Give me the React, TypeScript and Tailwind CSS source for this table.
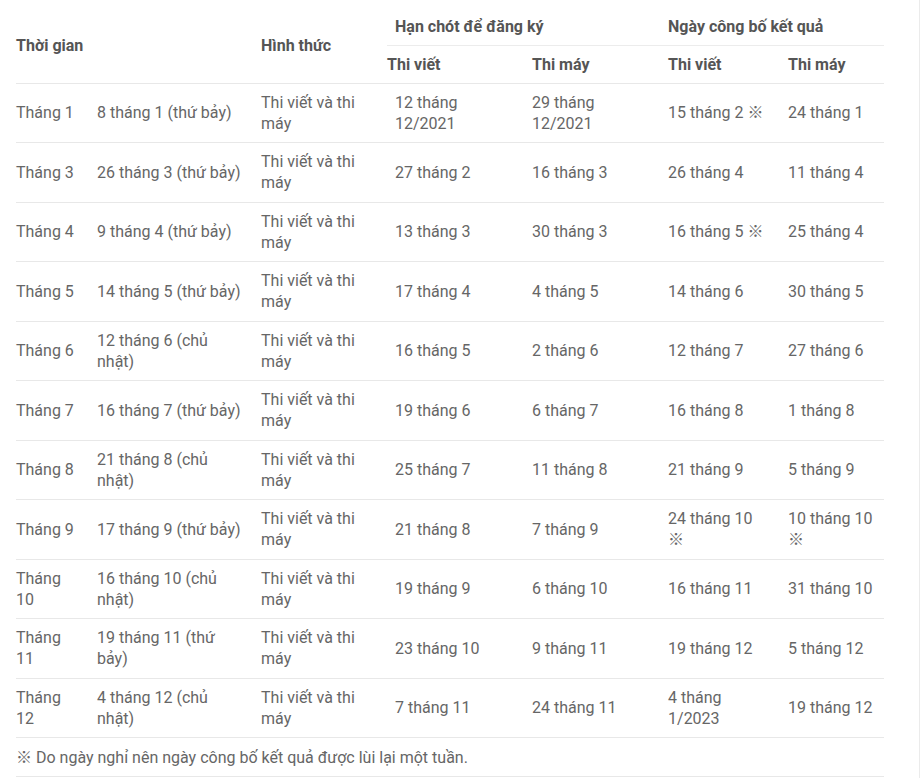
import React from "react";

type Row = {
  month: string;
  date: string;
  regWritten: string;
  regMachine: string;
  resWritten: string;
  resMachine: string;
};

const rows: Row[] = [
  { month: "Tháng 1", date: "8 tháng 1 (thứ bảy)", regWritten: "12 tháng 12/2021", regMachine: "29 tháng 12/2021", resWritten: "15 tháng 2 ※", resMachine: "24 tháng 1" },
  { month: "Tháng 3", date: "26 tháng 3 (thứ bảy)", regWritten: "27 tháng 2", regMachine: "16 tháng 3", resWritten: "26 tháng 4", resMachine: "11 tháng 4" },
  { month: "Tháng 4", date: "9 tháng 4 (thứ bảy)", regWritten: "13 tháng 3", regMachine: "30 tháng 3", resWritten: "16 tháng 5 ※", resMachine: "25 tháng 4" },
  { month: "Tháng 5", date: "14 tháng 5 (thứ bảy)", regWritten: "17 tháng 4", regMachine: "4 tháng 5", resWritten: "14 tháng 6", resMachine: "30 tháng 5" },
  { month: "Tháng 6", date: "12 tháng 6 (chủ nhật)", regWritten: "16 tháng 5", regMachine: "2 tháng 6", resWritten: "12 tháng 7", resMachine: "27 tháng 6" },
  { month: "Tháng 7", date: "16 tháng 7 (thứ bảy)", regWritten: "19 tháng 6", regMachine: "6 tháng 7", resWritten: "16 tháng 8", resMachine: "1 tháng 8" },
  { month: "Tháng 8", date: "21 tháng 8 (chủ nhật)", regWritten: "25 tháng 7", regMachine: "11 tháng 8", resWritten: "21 tháng 9", resMachine: "5 tháng 9" },
  { month: "Tháng 9", date: "17 tháng 9 (thứ bảy)", regWritten: "21 tháng 8", regMachine: "7 tháng 9", resWritten: "24 tháng 10 ※", resMachine: "10 tháng 10 ※" },
  { month: "Tháng 10", date: "16 tháng 10 (chủ nhật)", regWritten: "19 tháng 9", regMachine: "6 tháng 10", resWritten: "16 tháng 11", resMachine: "31 tháng 10" },
  { month: "Tháng 11", date: "19 tháng 11 (thứ bảy)", regWritten: "23 tháng 10", regMachine: "9 tháng 11", resWritten: "19 tháng 12", resMachine: "5 tháng 12" },
  { month: "Tháng 12", date: "4 tháng 12 (chủ nhật)", regWritten: "7 tháng 11", regMachine: "24 tháng 11", resWritten: "4 tháng 1/2023", resMachine: "19 tháng 12" },
];

export default function App() {
  return (
    <div
      className="w-[920px] h-[778px] bg-white border-r border-[#ebebeb] pl-4 text-[16px] leading-[21.25px] text-[#666]"
      style={{ fontFamily: "Roboto, 'Noto Sans CJK JP', sans-serif" }}
    >
      <table className="w-[868px] table-fixed border-collapse text-left">
        <colgroup>
          <col className="w-[81px]" />
          <col className="w-[164px]" />
          <col className="w-[126px]" />
          <col className="w-[145px]" />
          <col className="w-[136px]" />
          <col className="w-[120px]" />
          <col className="w-[96px]" />
        </colgroup>
        <thead className="font-bold text-[#555]">
          <tr>
            <th colSpan={2} rowSpan={2} className="pr-4 pt-2 align-middle border-b border-[#e8e8e8]">
              Thời gian
            </th>
            <th rowSpan={2} className="pr-4 pt-2 align-middle border-b border-[#e8e8e8]">
              Hình thức
            </th>
            <th colSpan={2} className="pl-2 pr-4 pt-4 pb-2 border-b border-[#ececec]">
              Hạn chót để đăng ký
            </th>
            <th colSpan={2} className="pt-4 pb-2 border-b border-[#ececec]">
              Ngày công bố kết quả
            </th>
          </tr>
          <tr>
            <th className="pr-4 pt-2 pb-[7px] border-b border-[#e8e8e8]">Thi viết</th>
            <th className="pr-4 pt-2 pb-[7px] border-b border-[#e8e8e8]">Thi máy</th>
            <th className="pr-5 pt-2 pb-[7px] border-b border-[#e8e8e8]">Thi viết</th>
            <th className="pt-2 pb-[7px] border-b border-[#e8e8e8]">Thi máy</th>
          </tr>
        </thead>
        <tbody>
          {rows.map((r) => (
            <tr key={r.month} className="border-b border-[#e8e8e8]">
              <td className="pr-4 py-2 align-middle">{r.month}</td>
              <td className="pr-4 py-2 align-middle">{r.date}</td>
              <td className="pr-4 py-2 align-middle">Thi viết và thi máy</td>
              <td className="pl-2 pr-4 py-2 align-middle">{r.regWritten}</td>
              <td className="pr-4 py-2 align-middle">{r.regMachine}</td>
              <td className="pr-5 py-2 align-middle">{r.resWritten}</td>
              <td className="py-2 align-middle">{r.resMachine}</td>
            </tr>
          ))}
          <tr className="border-b border-[#e8e8e8]">
            <td colSpan={7} className="py-2 pt-[8.5px]">
              ※ Do ngày nghỉ nên ngày công bố kết quả được lùi lại một tuần.
            </td>
          </tr>
        </tbody>
      </table>
    </div>
  );
}
